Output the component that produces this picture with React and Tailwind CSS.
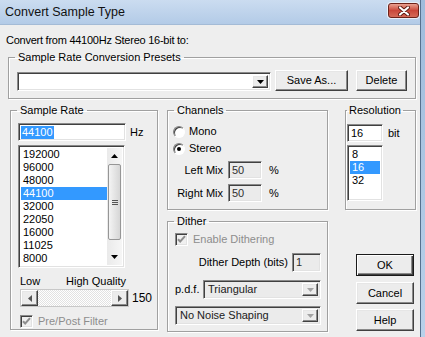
import React from 'react';

const sunken =
  'border border-t-[#8a8a8a] border-l-[#8a8a8a] border-r-white border-b-white shadow-[inset_1px_1px_0_#404040,inset_-1px_-1px_0_#e2e2e2]';
const raised =
  'border border-t-white border-l-white border-r-[#404040] border-b-[#404040] shadow-[inset_-1px_-1px_0_#8a8a8a,inset_1px_1px_0_#e6e6e6] bg-[#ececec]';

function Tri({ dir = 'down', color = '#000' }) {
  const d = {
    down: 'M0 0h7L3.5 4z',
    up: 'M0 4h7L3.5 0z',
    left: 'M4 0v7L0 3.5z',
    right: 'M0 0v7L4 3.5z',
  }[dir];
  const w = dir === 'left' || dir === 'right' ? 4 : 7;
  const h = dir === 'left' || dir === 'right' ? 7 : 4;
  return (
    <svg width={w} height={h} viewBox={`0 0 ${w} ${h}`}>
      <path d={d} fill={color} />
    </svg>
  );
}

function Group({ label, className, legendClass = 'ml-[6px] px-[3px]', children }) {
  return (
    <fieldset className={`border border-[#a0a0a0] shadow-[inset_1px_1px_0_#fff,1px_1px_0_#fff] ${className}`}>
      <legend className={`leading-[13px] ${legendClass}`}>{label}</legend>
      {children}
    </fieldset>
  );
}

function Combo({ text, disabled, className }) {
  return (
    <div className={`${sunken} ${disabled ? 'bg-[#ebebeb]' : 'bg-white'} flex items-stretch p-[2px] ${className}`}>
      <div className="flex-1 flex items-center pl-[2px] text-[#202020]">{text}</div>
      <div className={`${raised} w-[16px] flex items-center justify-center`}>
        <Tri color={disabled ? '#a3a3a3' : '#000'} />
      </div>
    </div>
  );
}

function Check({ label }) {
  return (
    <div className="flex items-center h-[13px]">
      <div className={`${sunken} w-[13px] h-[13px] bg-[#f0f0f0] flex items-center justify-center`}>
        <svg width="9" height="9" viewBox="0 0 9 9">
          <path d="M1 4.2l2.2 2.3L8 1.2" stroke="#8e8e8e" strokeWidth="2" fill="none" />
        </svg>
      </div>
      <span className="ml-[5px] text-[#8d8d8d]">{label}</span>
    </div>
  );
}

function Radio({ label, on }) {
  return (
    <div className="flex items-center h-[13px]">
      <div className="w-[12px] h-[12px] rounded-full border border-t-[#808080] border-l-[#808080] border-r-white border-b-white bg-white shadow-[inset_1px_1px_0_#404040] flex items-center justify-center">
        {on && <div className="w-[4px] h-[4px] rounded-full bg-black" />}
      </div>
      <span className="ml-[4px]">{label}</span>
    </div>
  );
}

function Button({ children, primary, className }) {
  return (
    <div
      className={`${
        primary
          ? 'border border-[#1a1a1a] shadow-[inset_1px_1px_0_#fff,inset_-1px_-1px_0_#404040,inset_-2px_-2px_0_#8a8a8a] bg-[#ececec]'
          : raised
      } flex items-center justify-center ${className}`}
    >
      {children}
    </div>
  );
}

const rates = ['192000', '96000', '48000', '44100', '32000', '22050', '16000', '11025', '8000', '6000'];

export default function App() {
  return (
    <div className="w-[425px] h-[337px] flex overflow-hidden bg-[#eeeeee] text-[11px] text-black font-['Liberation_Sans',Arial,sans-serif]">
      <div className="w-[420px] flex flex-col">
        {/* title bar */}
        <div className="h-[25px] shrink-0 flex items-center bg-gradient-to-b from-[#cbdcf0] to-[#b3cbe7] border-b border-[#a4bbd6]">
          <span className="ml-[5px] text-[12.5px] text-[#111]">Convert Sample Type</span>
          <div className="ml-auto mr-[1px] mb-[3px] w-[31px] h-[15px] rounded-[3px] border border-[#6e2219] bg-gradient-to-b from-[#e8a091] via-[#c9473a] to-[#d46a58] shadow-[0_0_0_1px_#e9f0f8] flex items-center justify-center">
            <svg width="12" height="10" viewBox="0 0 12 10">
              <path d="M2 1.5l8 7M10 1.5l-8 7" stroke="#5b1a13" strokeWidth="4" strokeLinecap="round" />
              <path d="M2 1.5l8 7M10 1.5l-8 7" stroke="#fff" strokeWidth="2.2" strokeLinecap="round" />
            </svg>
          </div>
        </div>

        {/* client */}
        <div className="flex-1 flex flex-col pt-[9px]">
          <div className="pl-[6px] leading-[13px] tracking-[-0.25px]">Convert from 44100Hz Stereo 16-bit to:</div>

          <Group label="Sample Rate Conversion Presets" className="mt-[4px] ml-[8px] w-[408px] h-[48px]">
            <div className="mt-[6px] pl-[8px] flex items-end">
              <Combo className="w-[254px] h-[19px]" />
              <Button className="ml-[4px] w-[73px] h-[21px]">Save As...</Button>
              <Button className="ml-[8px] w-[51px] h-[21px]">Delete</Button>
            </div>
          </Group>

          <div className="mt-[5px] flex items-start">
            {/* Sample rate */}
            <Group label="Sample Rate" className="ml-[10px] w-[148px] h-[226px]">
              <div className="pl-[7px] flex flex-col">
                <div className="mt-[6px] flex items-center">
                  <div className={`${sunken} bg-white w-[108px] h-[18px] flex items-center pl-[2px]`}>
                    <span className="bg-[#3399ff] text-white px-[1px] leading-[13px]">44100</span>
                  </div>
                  <span className="ml-[4px]">Hz</span>
                </div>

                <div className={`${sunken} bg-white mt-[4px] w-[107px] h-[123px] flex p-[2px]`}>
                  <div className="flex-1 overflow-hidden">
                    {rates.map((r) => (
                      <div
                        key={r}
                        className={`h-[13px] leading-[13px] pl-[2px] ${r === '44100' ? 'bg-[#3399ff] text-white' : ''}`}
                      >
                        {r}
                      </div>
                    ))}
                  </div>
                  <div className="w-[15px] flex flex-col bg-gradient-to-r from-[#eaeaea] to-[#f6f6f6]">
                    <div className="h-[16px] flex items-center justify-center">
                      <Tri dir="up" />
                    </div>
                    <div className="mx-[1px] h-[76px] rounded-[2px] border border-[#969696] bg-gradient-to-r from-[#f4f4f4] to-[#d6d6d6] flex flex-col items-center justify-center gap-[1px]">
                      <div className="w-[6px] h-[1px] bg-[#555]" />
                      <div className="w-[6px] h-[1px] bg-[#555]" />
                      <div className="w-[6px] h-[1px] bg-[#555]" />
                    </div>
                    <div className="mt-auto h-[16px] flex items-center justify-center">
                      <Tri />
                    </div>
                  </div>
                </div>

                <div className="mt-[7px] ml-[2px] w-[106px] h-[13px] flex justify-between leading-[13px]">
                  <span>Low</span>
                  <span>High Quality</span>
                </div>

                <div className="mt-[1px] ml-[2px] flex items-center">
                  <div className="w-[109px] h-[18px] flex border border-[#c8c8c8]">
                    <div className={`${raised} w-[17px] flex items-center justify-center`}>
                      <Tri dir="left" color="#555" />
                    </div>
                    <div className="flex-1 bg-[#f4f4f4] bg-[image:repeating-conic-gradient(#ffffff_0_25%,#e2e2e2_0_50%)] bg-[length:2px_2px]" />
                    <div className={`${raised} w-[17px] flex items-center justify-center`}>
                      <Tri dir="right" color="#555" />
                    </div>
                  </div>
                  <span className="ml-[3px] text-[12px]">150</span>
                </div>

                <div className="mt-[8px] ml-[2px]">
                  <Check label="Pre/Post Filter" />
                </div>
              </div>
            </Group>

            {/* Channels + dither */}
            <div className="ml-[9px] w-[161px] flex flex-col">
              <Group label="Channels" className="h-[106px]">
                <div className="pl-[5px] flex flex-col">
                  <div className="mt-[8px]">
                    <Radio label="Mono" />
                  </div>
                  <div className="mt-[4px]">
                    <Radio label="Stereo" on />
                  </div>
                  <div className="mt-[6px] ml-[4px] flex items-center h-[18px]">
                    <span className="w-[46px] text-right">Left Mix</span>
                    <div className={`${sunken} bg-[#ebebeb] ml-[5px] w-[34px] h-[18px] flex items-center pl-[3px] text-[#303030]`}>50</div>
                    <span className="ml-[7px]">%</span>
                  </div>
                  <div className="mt-[5px] ml-[4px] flex items-center h-[18px]">
                    <span className="w-[46px] text-right">Right Mix</span>
                    <div className={`${sunken} bg-[#ebebeb] ml-[5px] w-[34px] h-[18px] flex items-center pl-[3px] text-[#303030]`}>50</div>
                    <span className="ml-[7px]">%</span>
                  </div>
                </div>
              </Group>

              <Group label="Dither" className="mt-[5px] h-[117px]">
                <div className="pl-[7px] w-[153px] flex flex-col">
                  <div className="mt-[5px]">
                    <Check label="Enable Dithering" />
                  </div>
                  <div className="mt-[7px] flex items-center justify-end h-[19px]">
                    <span>Dither Depth (bits)</span>
                    <div className={`${sunken} bg-[#ebebeb] ml-[4px] w-[29px] h-[19px] flex items-center pl-[3px] text-[#303030]`}>1</div>
                  </div>
                  <div className="mt-[8px] flex items-center h-[19px]">
                    <span>p.d.f.</span>
                    <Combo disabled text="Triangular" className="ml-auto w-[118px] h-[19px]" />
                  </div>
                  <Combo disabled text="No Noise Shaping" className="mt-[7px] w-[146px] h-[19px]" />
                </div>
              </Group>
            </div>

            {/* Resolution + buttons */}
            <div className="ml-[17px] w-[71px] flex flex-col">
              <Group label="Resolution" legendClass="ml-[1px] px-[2px]" className="h-[106px]">
                <div className="pl-[1px] flex flex-col">
                  <div className="mt-[7px] flex items-center">
                    <div className={`${sunken} bg-white w-[36px] h-[18px] flex items-center pl-[3px]`}>16</div>
                    <span className="ml-[5px]">bit</span>
                  </div>
                  <div className={`${sunken} bg-white mt-[3px] w-[36px] h-[56px] p-[2px]`}>
                    {['8', '16', '32'].map((b) => (
                      <div key={b} className={`h-[13px] leading-[13px] pl-[2px] ${b === '16' ? 'bg-[#3399ff] text-white' : ''}`}>
                        {b}
                      </div>
                    ))}
                  </div>
                </div>
              </Group>

              <div className="ml-[11px] flex flex-col">
                <Button primary className="mt-[44px] w-[58px] h-[22px]">OK</Button>
                <Button className="mt-[6px] w-[58px] h-[22px]">Cancel</Button>
                <Button className="mt-[5px] w-[58px] h-[22px]">Help</Button>
              </div>
            </div>
          </div>
        </div>
      </div>

      {/* window frame */}
      <div className="w-[5px] border-l border-[#56718f] bg-gradient-to-b from-[#9fbcdc] to-[#b9d1ea]" />
    </div>
  );
}
